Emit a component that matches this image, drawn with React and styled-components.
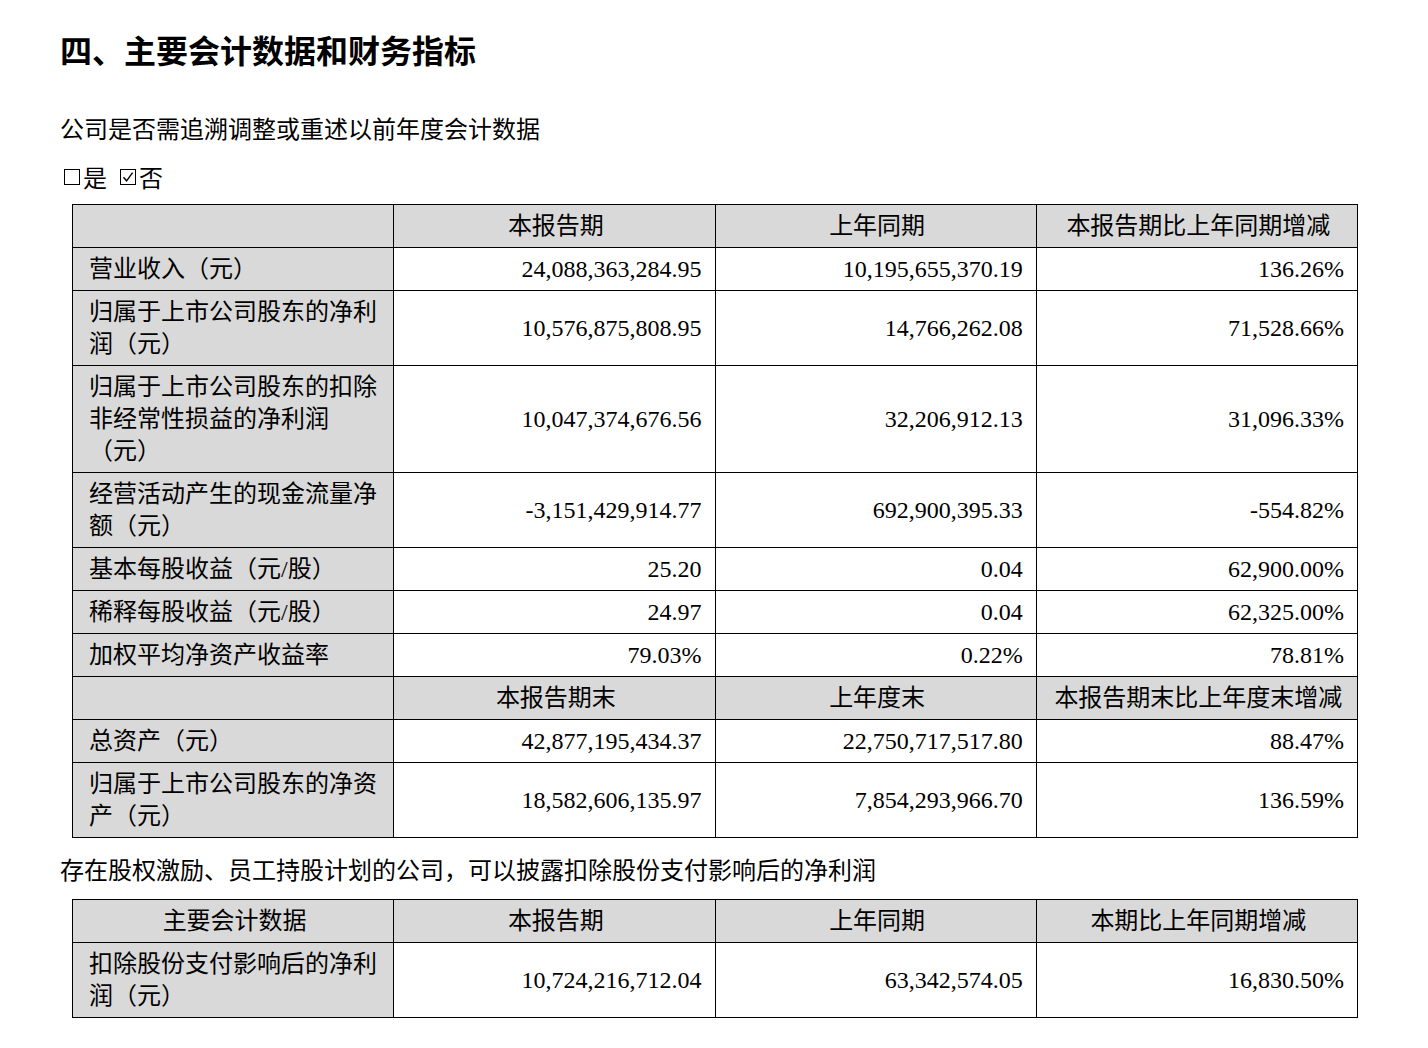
import styled, { createGlobalStyle } from "styled-components";

const GlobalStyle = createGlobalStyle`
  body {
    margin: 0;
    background: #ffffff;
    color: #000000;
    font-family: "Liberation Serif", "Noto Sans CJK SC", serif;
  }
`;

const mainRows = [
  { head: true, cells: ["", "本报告期", "上年同期", "本报告期比上年同期增减"] },
  { cells: ["营业收入（元）", "24,088,363,284.95", "10,195,655,370.19", "136.26%"] },
  { cells: ["归属于上市公司股东的净利润（元）", "10,576,875,808.95", "14,766,262.08", "71,528.66%"] },
  { cells: ["归属于上市公司股东的扣除非经常性损益的净利润（元）", "10,047,374,676.56", "32,206,912.13", "31,096.33%"] },
  { cells: ["经营活动产生的现金流量净额（元）", "-3,151,429,914.77", "692,900,395.33", "-554.82%"] },
  { cells: ["基本每股收益（元/股）", "25.20", "0.04", "62,900.00%"] },
  { cells: ["稀释每股收益（元/股）", "24.97", "0.04", "62,325.00%"] },
  { cells: ["加权平均净资产收益率", "79.03%", "0.22%", "78.81%"] },
  { head: true, cells: ["", "本报告期末", "上年度末", "本报告期末比上年度末增减"] },
  { cells: ["总资产（元）", "42,877,195,434.37", "22,750,717,517.80", "88.47%"] },
  { cells: ["归属于上市公司股东的净资产（元）", "18,582,606,135.97", "7,854,293,966.70", "136.59%"] },
];

const shareRows = [
  { head: true, cells: ["主要会计数据", "本报告期", "上年同期", "本期比上年同期增减"] },
  { cells: ["扣除股份支付影响后的净利润（元）", "10,724,216,712.04", "63,342,574.05", "16,830.50%"] },
];

function DataTable({ rows }) {
  return (
    <Table>
      <colgroup>
        <col />
        <col />
        <col />
        <col />
      </colgroup>
      <tbody>
        {rows.map((row, i) => (
          <tr key={i}>
            {row.cells.map((c, j) =>
              row.head ? (
                <HeadCell key={j}>{c}</HeadCell>
              ) : j === 0 ? (
                <LabelCell key={j}>{c}</LabelCell>
              ) : (
                <ValueCell key={j}>{c}</ValueCell>
              )
            )}
          </tr>
        ))}
      </tbody>
    </Table>
  );
}

function Checkbox({ checked, $left }) {
  return (
    <Box $left={$left}>
      {checked && (
        <svg width="14" height="14" viewBox="0 0 14 14">
          <path d="M2.5 7.2 L5.6 10.8 L11.6 2.6" fill="none" stroke="#000" strokeWidth="1.4" />
        </svg>
      )}
    </Box>
  );
}

export default function App() {
  return (
    <Page>
      <GlobalStyle />
      <Title>四、主要会计数据和财务指标</Title>
      <Para>公司是否需追溯调整或重述以前年度会计数据</Para>
      <ChoiceLine>
        <Checkbox $left={4} />
        <span>是</span>
        <Checkbox checked $left={13} />
        <span>否</span>
      </ChoiceLine>
      <DataTable rows={mainRows} />
      <Para $top={10}>存在股权激励、员工持股计划的公司，可以披露扣除股份支付影响后的净利润</Para>
      <DataTable rows={shareRows} />
    </Page>
  );
}

const Page = styled.main`
  padding: 32px 0 0 60px;
  width: 1298px;
`;

const Title = styled.h1`
  margin: 0 0 35px;
  font-size: 32px;
  line-height: 40px;
  font-weight: bold;
  font-family: "Liberation Serif", "Noto Sans CJK SC", serif;
`;

const Para = styled.p`
  margin: ${(p) => p.$top || 0}px 0 0;
  font-size: 24px;
  line-height: 46px;
`;

const ChoiceLine = styled.div`
  display: flex;
  align-items: center;
  height: 46px;
  font-size: 24px;
`;

const Box = styled.span`
  box-sizing: border-box;
  display: inline-flex;
  align-items: center;
  justify-content: center;
  width: 16px;
  height: 16px;
  border: 1px solid #000000;
  margin: 2px 3px 0 ${(p) => p.$left || 0}px;
`;

const Table = styled.table`
  margin: 5px 0 0 12px;
  width: 1286px;
  border-collapse: collapse;
  table-layout: fixed;
  font-size: 24px;
  line-height: 32px;
  col {
    width: 25%;
  }
  td {
    border: 1px solid #000000;
    padding: 5px 13px 5px 16px;
    vertical-align: middle;
  }
`;

const HeadCell = styled.td`
  background: #d9d9d9;
  text-align: center;
`;

const LabelCell = styled.td`
  background: #d9d9d9;
  text-align: left;
`;

const ValueCell = styled.td`
  background: #ffffff;
  text-align: right;
`;
